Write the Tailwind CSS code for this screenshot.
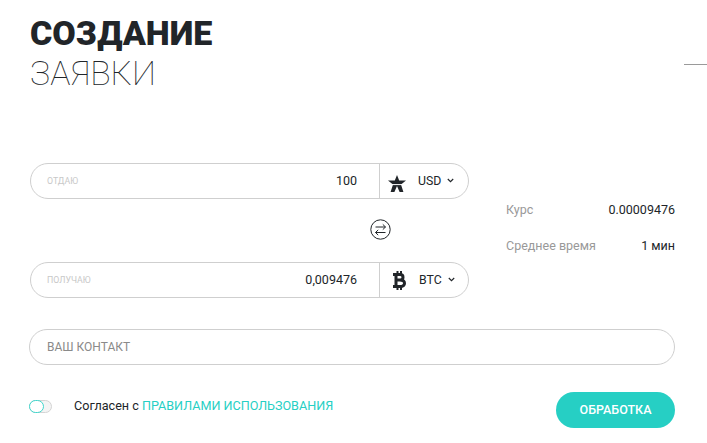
<!DOCTYPE html>
<html><head><meta charset="utf-8">
<script src="https://cdn.jsdelivr.net/npm/@tailwindcss/browser@4"></script>
</head>
<body class="bg-white">
<div class="relative w-[707px] h-[443px] overflow-hidden font-['Roboto',sans-serif] text-[#212529]">
  <div class="absolute right-0 top-[64px] w-[23px] h-px bg-[#9a9a9a]"></div>
  <div class="pl-[30px] pr-[32px] pt-[12px]">
    <h1 class="text-[34px] leading-[42px] font-black text-[#212529]">СОЗДАНИЕ</h1>
    <h2 class="text-[33.8px] leading-[42px] font-thin mt-[-1px] text-[#212529]">ЗАЯВКИ</h2>

    <div class="flex mt-[68px]">
      <div class="w-[439px] flex flex-col">
        <div class="h-[36px] border border-[#cfcfcf] rounded-full flex items-center">
          <span class="ml-[16px] mt-[1px] text-[8.8px] text-[#c8c8c8] uppercase">Отдаю</span>
          <span class="ml-auto mr-[22px] text-[12.5px]">100</span>
          <div class="w-[89px] h-full border-l border-[#cfcfcf] flex items-center">
            <svg class="ml-[8px] mt-[5px]" width="18" height="17" viewBox="0 0 18 17"><path d="M9 0 L11.2 5.6 H18 L13 9.6 L15.4 17 L11.6 17 L9 11 L6.4 17 L2.6 17 L5 9.6 L0 5.6 H6.8 Z" fill="#212529"/><path d="M2.5 9.6 H15.5" stroke="#fff" stroke-width="1"/></svg>
            <span class="ml-[12px] text-[12.3px]">USD</span>
            <svg class="ml-[6px] mb-[2px]" width="7" height="5" viewBox="0 0 7 5"><path d="M0.8 1 L3.5 3.6 L6.2 1" fill="none" stroke="#212529" stroke-width="1.2"/></svg>
          </div>
        </div>
        <div class="h-[63px] flex items-center justify-end pr-[78px] pb-[2px]">
          <svg width="21" height="21" viewBox="0 0 21 21" fill="none" stroke="#212529" stroke-width="1"><circle cx="10.5" cy="10.5" r="9.7"/><path d="M5.5 8 H15.5 M12.8 5.4 L15.5 8 L12.8 10.6 M15.5 13.5 H5.5 M8.2 10.9 L5.5 13.5 L8.2 16.1"/></svg>
        </div>
        <div class="h-[36px] border border-[#cfcfcf] rounded-full flex items-center">
          <span class="ml-[16px] mt-[1px] text-[8.8px] text-[#c8c8c8] uppercase">Получаю</span>
          <span class="ml-auto mr-[22px] text-[12.5px]">0,009476</span>
          <div class="w-[89px] h-full border-l border-[#cfcfcf] flex items-center">
            <svg class="ml-[12px]" width="14" height="19" viewBox="0 0 14 19" fill="none" stroke="#212529"><path d="M1 3.5 H8 Q11 3.5 11 6.2 Q11 9 8 9 H4 M8 9 Q12.5 9 12.5 12.2 Q12.5 15.5 8 15.5 H1 M4 3 V16" stroke-width="3"/><path d="M5.5 0 V3 M9 0 V3 M5.5 16 V19 M9 16 V19" stroke-width="2"/></svg>
            <span class="ml-[13px] text-[12.3px]">BTC</span>
            <svg class="ml-[6px] mb-[2px]" width="7" height="5" viewBox="0 0 7 5"><path d="M0.8 1 L3.5 3.6 L6.2 1" fill="none" stroke="#212529" stroke-width="1.2"/></svg>
          </div>
        </div>
      </div>
      <div class="flex-1 ml-[37px] pt-[38px] text-[12.5px]">
        <div class="flex justify-between h-[36px]"><span class="text-[#999]">Курс</span><span>0.00009476</span></div>
        <div class="flex justify-between"><span class="text-[#999]">Среднее время</span><span>1 мин</span></div>
      </div>
    </div>

    <div class="ml-[-1px] mt-[31px] h-[36px] border border-[#cfcfcf] rounded-full flex items-center pl-[17px] text-[12px] text-[#8a8a8a]">ВАШ КОНТАКТ</div>

    <div class="ml-[-1px] mt-[27px] flex items-start">
      <div class="flex items-center mt-[5px]">
        <div class="relative w-[23px] h-[13px] rounded-full bg-[#f4f4f4] border border-[#d4d4d4]">
          <div class="absolute left-[-1px] top-[-1px] w-[15px] h-[13px] rounded-full bg-white border-[1.5px] border-[#3fd6cc]"></div>
        </div>
        <span class="ml-[22px] text-[12.6px]">Согласен с <a class="text-[#26cfc4]">ПРАВИЛАМИ ИСПОЛЬЗОВАНИЯ</a></span>
      </div>
      <button class="ml-auto w-[119px] h-[36px] rounded-full bg-[#26cfc4] text-white text-[12.5px] font-medium">ОБРАБОТКА</button>
    </div>
  </div>
</div>
</body></html>
